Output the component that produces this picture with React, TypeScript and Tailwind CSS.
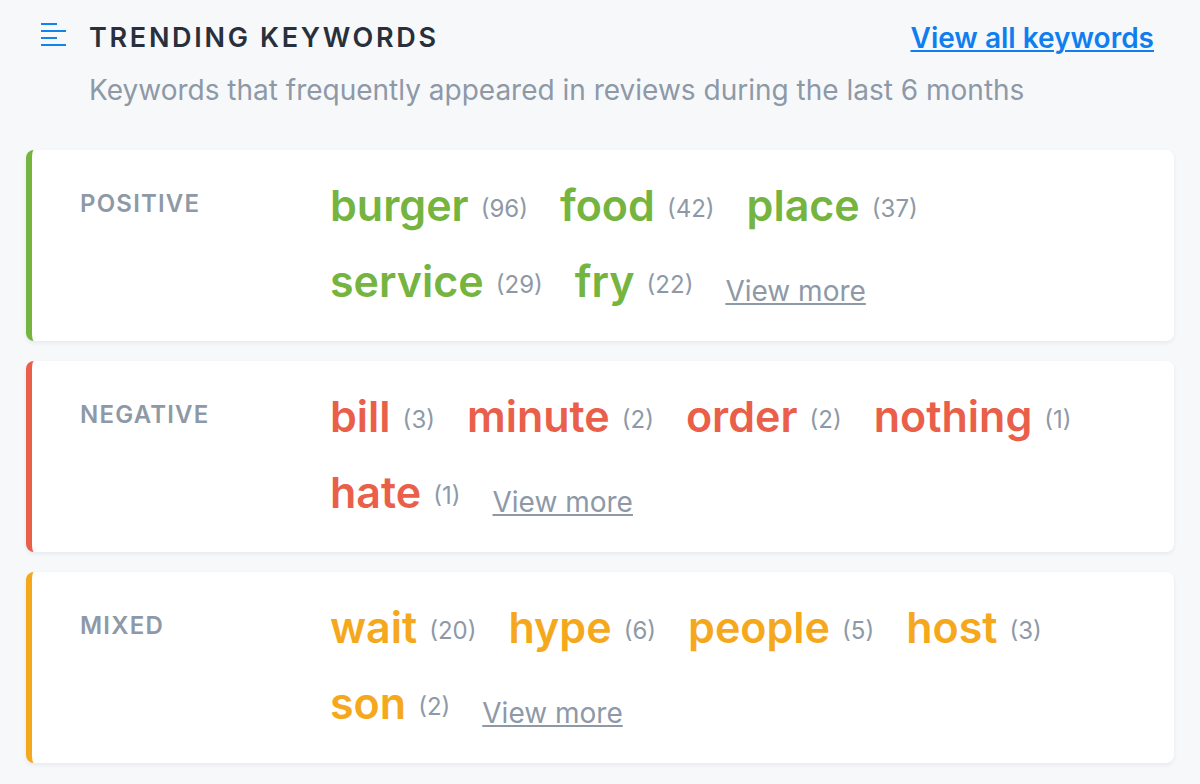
type Keyword = { word: string; count: number };

type Group = {
  label: string;
  border: string;
  text: string;
  keywords: Keyword[];
};

const groups: Group[] = [
  {
    label: 'Positive',
    border: 'border-[#74b43f]',
    text: 'text-[#74b43f]',
    keywords: [
      { word: 'burger', count: 96 },
      { word: 'food', count: 42 },
      { word: 'place', count: 37 },
      { word: 'service', count: 29 },
      { word: 'fry', count: 22 },
    ],
  },
  {
    label: 'Negative',
    border: 'border-[#ea5f4a]',
    text: 'text-[#ea5f4a]',
    keywords: [
      { word: 'bill', count: 3 },
      { word: 'minute', count: 2 },
      { word: 'order', count: 2 },
      { word: 'nothing', count: 1 },
      { word: 'hate', count: 1 },
    ],
  },
  {
    label: 'Mixed',
    border: 'border-[#f5a81c]',
    text: 'text-[#f5a81c]',
    keywords: [
      { word: 'wait', count: 20 },
      { word: 'hype', count: 6 },
      { word: 'people', count: 5 },
      { word: 'host', count: 3 },
      { word: 'son', count: 2 },
    ],
  },
];

function ListIcon() {
  return (
    <svg
      viewBox="0 0 25 24"
      className="mt-[5px] h-6 w-[25px] shrink-0"
      fill="#1282ec"
      aria-hidden="true"
    >
      <rect x="0" y="0" width="16" height="2" />
      <rect x="0" y="7" width="25" height="2" />
      <rect x="0" y="14" width="16" height="2" />
      <rect x="0" y="21" width="25" height="2" />
    </svg>
  );
}

function KeywordCard({ group }: { group: Group }) {
  return (
    <section
      className={`flex rounded-lg border-l-6 bg-white px-12 pt-[31px] pb-9 shadow-[0_2px_4px_rgba(40,40,80,0.07)] ${group.border}`}
    >
      <h3 className="w-[250px] shrink-0 pt-[9px] text-[24px] leading-7 font-semibold tracking-wider text-[#8e99a7] uppercase">
        {group.label}
      </h3>
      <ul className="flex min-w-0 flex-1 flex-wrap gap-x-8 gap-y-7">
        {group.keywords.map((k) => (
          <li key={k.word} className="flex items-center gap-3">
            <span className={`text-[43px] leading-12 font-semibold ${group.text}`}>
              {k.word}
            </span>
            <span className="pt-2 text-[24px] leading-7 text-[#8e99a7]">({k.count})</span>
          </li>
        ))}
        <li className="flex items-end">
          <a
            href="#more"
            className="text-[28px] leading-7 text-[#8e99a7] underline decoration-2 underline-offset-2"
          >
            View more
          </a>
        </li>
      </ul>
    </section>
  );
}

export default function App() {
  return (
    <main className="min-h-screen bg-[#f7f8fa] px-[26px] pt-[18px] pb-5 font-['Inter',sans-serif]">
      <header className="flex items-start gap-[23px] pr-5 pl-[15px]">
        <ListIcon />
        <div className="min-w-0 flex-1">
          <div className="flex items-center justify-between">
            <h2 className="text-[27px] leading-10 font-semibold tracking-widest text-[#28303d] uppercase">
              Trending keywords
            </h2>
            <a
              href="#keywords"
              className="text-[28px] leading-10 font-semibold text-[#0f7ff0] underline decoration-2 underline-offset-2"
            >
              View all keywords
            </a>
          </div>
          <p className="mt-3 text-[28px] leading-10 text-[#8e99a7]">
            Keywords that frequently appeared in reviews during the last 6 months
          </p>
        </div>
      </header>
      <div className="mt-10 flex flex-col gap-5">
        {groups.map((g) => (
          <KeywordCard key={g.label} group={g} />
        ))}
      </div>
    </main>
  );
}
